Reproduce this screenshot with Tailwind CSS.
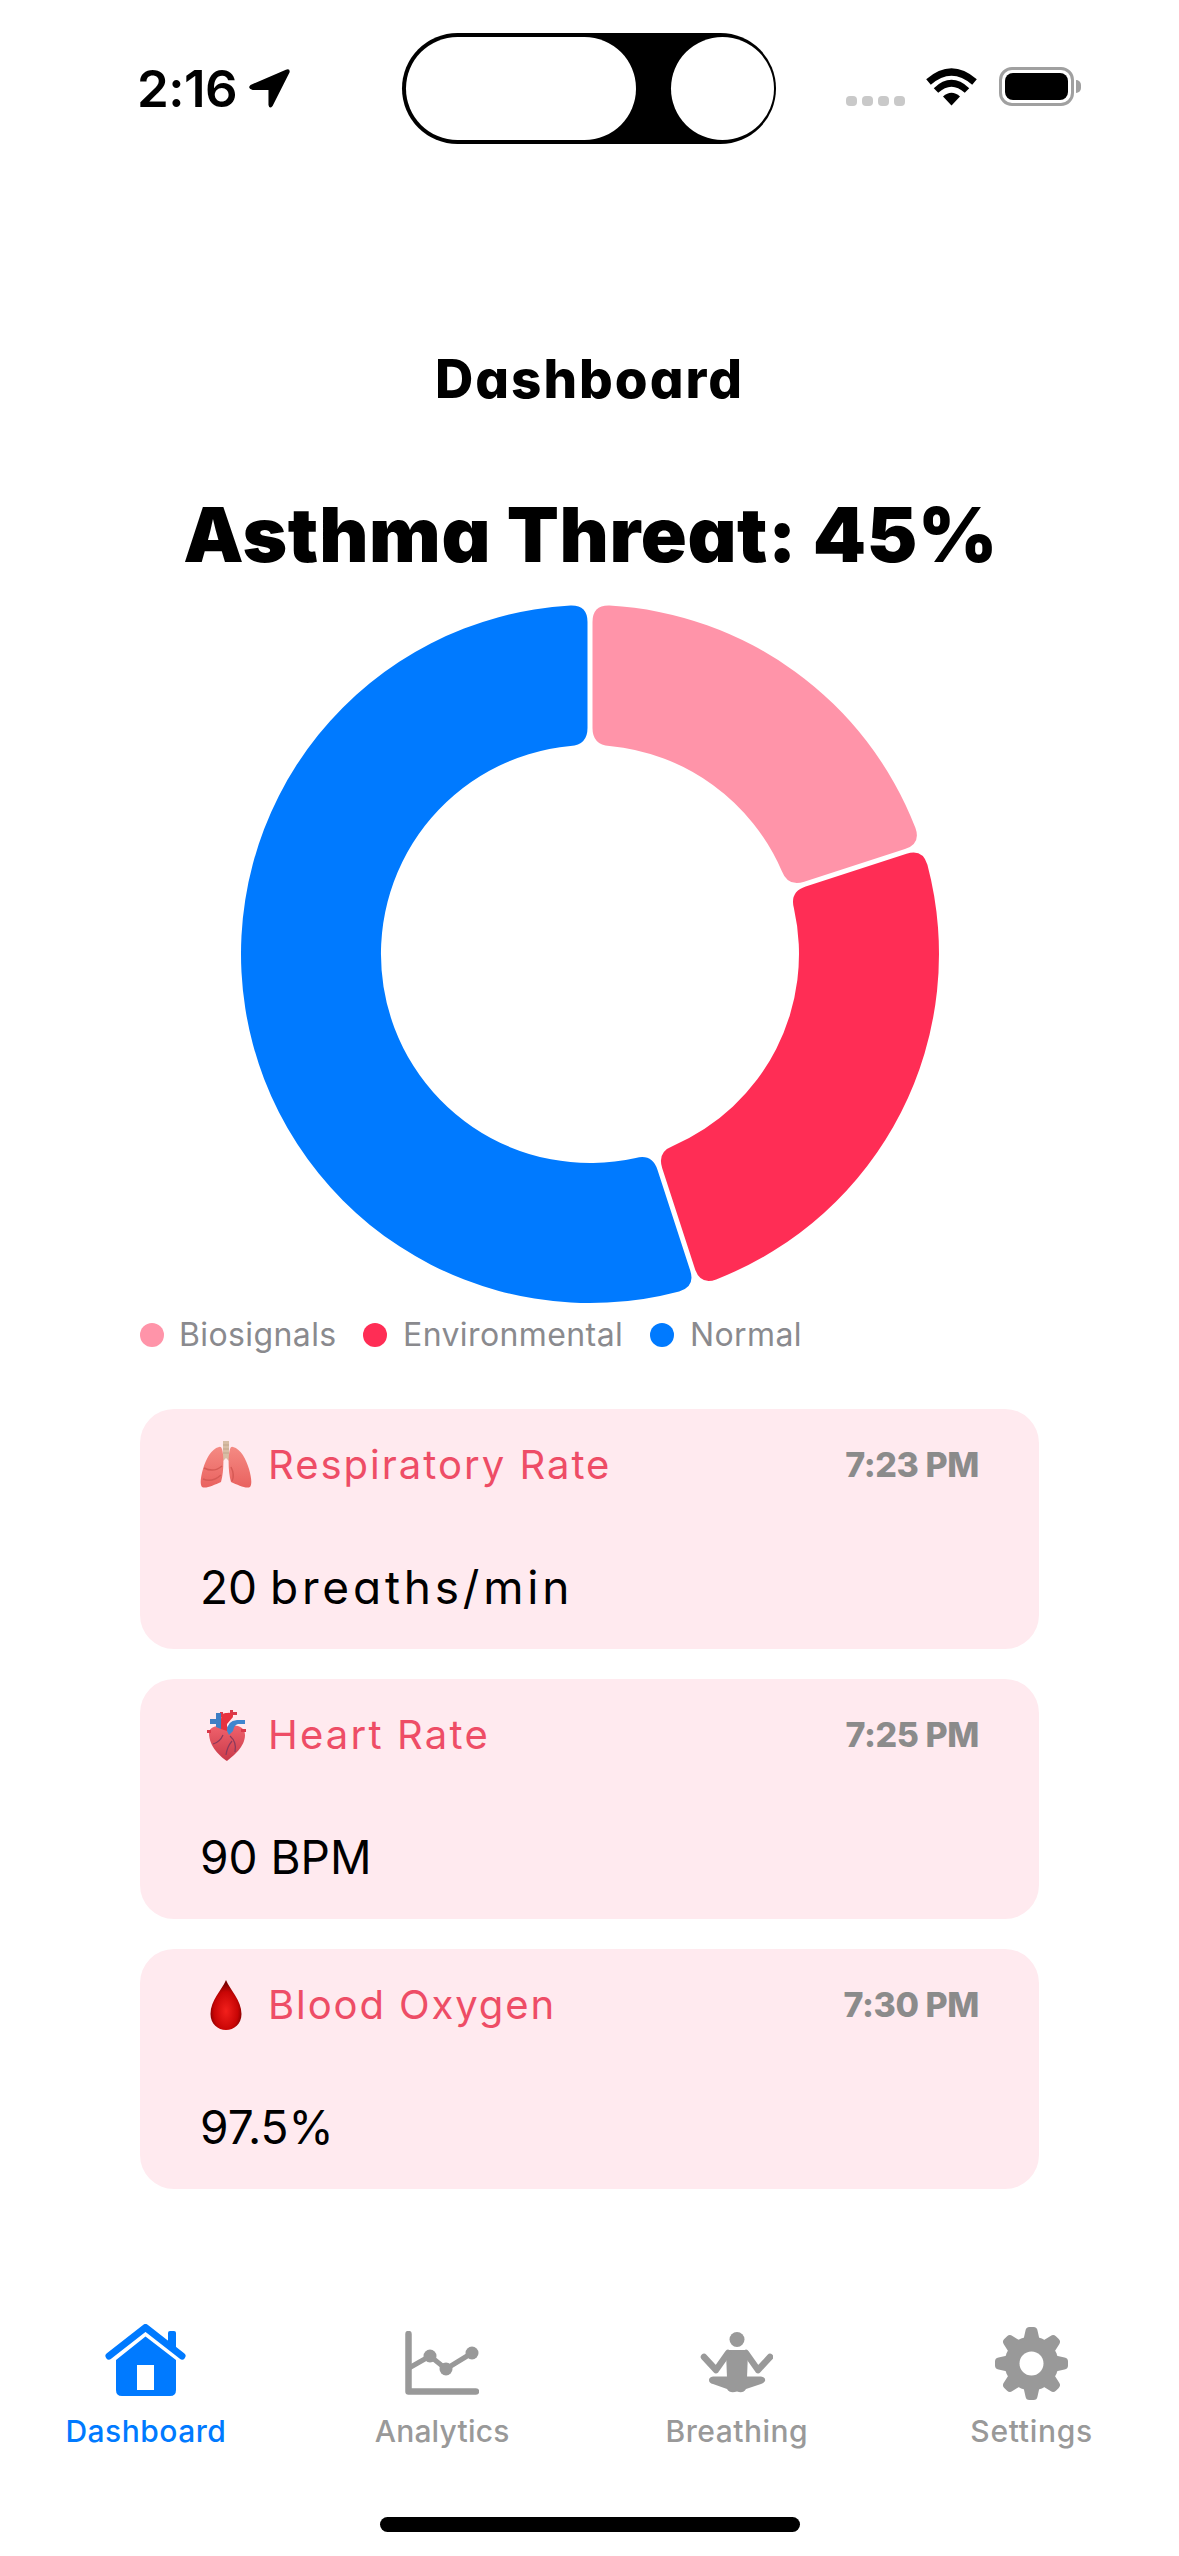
<!DOCTYPE html>
<html lang="en">

<head>
  <meta charset="UTF-8">
  <title>Dashboard</title>
  <script src="https://cdn.jsdelivr.net/npm/@tailwindcss/browser@4"></script>
</head>

<body class="bg-white text-black min-h-screen [font-family:Inter,sans-serif] overflow-hidden">
  <div class="w-[1179px] h-[2556px] bg-white">

    <!-- status bar -->
    <div class="flex h-[144px] pt-[33px] pl-[137px]">
      <div class="flex items-center w-[265px] h-[111px]">
        <span class="text-[51px] leading-[60px] font-semibold tracking-[-0.5px]">2:16</span>
        <svg class="ml-[12px]" width="41" height="39" viewBox="0 0 40 38"><path d="M1.500 15.500 L36 .6 Q40.500 -.8 39.500 3.500 L23 36 Q20 39.500 19 35 V20.500 H3.500 Q-2 18.500 1.500 15.500Z" fill="#000"/></svg>
      </div>
      <div class="flex justify-between items-center w-[374px] h-[111px] bg-black rounded-full pl-[4px] pr-[2px]">
        <div class="w-[230px] h-[103px] bg-white rounded-full"></div>
        <div class="w-[103px] h-[103px] bg-white rounded-full"></div>
      </div>
      <div class="flex items-end h-[38px] mt-[35px] ml-[70px]">
        <div class="flex gap-[5px]">
          <span class="w-[11px] h-[10px] rounded-[4px] bg-[#c9c9c9]"></span>
          <span class="w-[11px] h-[10px] rounded-[4px] bg-[#c9c9c9]"></span>
          <span class="w-[11px] h-[10px] rounded-[4px] bg-[#c9c9c9]"></span>
          <span class="w-[11px] h-[10px] rounded-[4px] bg-[#c9c9c9]"></span>
        </div>
        <svg class="ml-[21px]" width="51" height="38" viewBox="0 0 51 38">
          <path d="M2.500 14 Q25.500 -6 48.500 14" fill="none" stroke="#000" stroke-width="7"/>
          <path d="M10 22.500 Q25.500 8 41 22.500" fill="none" stroke="#000" stroke-width="6.500"/>
          <path d="M25.500 37.500 L17 28.500 Q25.500 21 34 28.500Z" fill="#000"/>
        </svg>
        <div class="relative ml-[22px] w-[75px] h-[39px] border-[3px] border-[#a0a0a0] rounded-[13px] p-[3px]">
          <div class="w-full h-full bg-black rounded-[8px]"></div>
          <span class="absolute -right-[10px] top-[10px] w-[5px] h-[13px] rounded-r-full bg-[#a0a0a0]"></span>
        </div>
      </div>
    </div>

    <h1 class="mt-[205px] text-center text-[53px] leading-[60px] font-extrabold tracking-[2px] [font-feature-settings:'cv11']">Dashboard</h1>
    <h2 class="mt-[83px] pl-[2px] text-center text-[76px] leading-[84px] font-black tracking-[0.6px] [font-feature-settings:'cv11']">Asthma Threat: 45%</h2>

    <!-- donut -->
    <svg id="donut" class="block mx-auto mt-[28px]" width="700" height="700" viewBox="0 0 700 700"></svg>

    <!-- legend -->
    <div class="flex items-center h-[40px] mt-[11px] pl-[140px] text-[32px] leading-[40px] text-[#8a8a8e] tracking-[0.4px]">
      <span class="w-[24px] h-[24px] rounded-full bg-[#ff94a9]"></span>
      <span class="ml-[15px] w-[184px]">Biosignals</span>
      <span class="w-[24px] h-[24px] rounded-full bg-[#ff2d55]"></span>
      <span class="ml-[16px] w-[247px]">Environmental</span>
      <span class="w-[24px] h-[24px] rounded-full bg-[#007aff]"></span>
      <span class="ml-[16px]">Normal</span>
    </div>

    <!-- vitals -->
    <div class="mt-[54px] mx-[140px] w-[899px] flex flex-col gap-[30px]">
      <div class="h-[240px] rounded-[34px] bg-[#ffeaef] px-[60px] pt-[31px]">
        <div class="flex items-center justify-between h-[50px]">
          <div class="flex items-center gap-[16px]">
            <svg class="w-[52px] h-[48px]" viewBox="0 0 52 48">
              <defs>
                <linearGradient id="lung" x1="0" y1="0" x2="0" y2="1"><stop offset="0" stop-color="#f58a83"/><stop offset="1" stop-color="#e9625f"/></linearGradient>
              </defs>
              <path d="M23 0 H29 V15 L34 22 H31 L26 17 L21 22 H18 L23 15Z" fill="#d8bda5"/>
              <path d="M23 4 H29 M23 8 H29 M23 12 H29" stroke="#c2a58c" stroke-width="1"/>
              <path d="M19 6 C11 8 6 18 3 28 C1 35 -.5 43 2 46 C6 48 14 44 21 41 C24 31 24 14 22 8 Q21 5 19 6Z" fill="url(#lung)"/>
              <path d="M33 6 C41 8 46 18 49 28 C51 35 52.500 43 50 46 C46 48 38 44 31 41 C28 31 28 14 30 8 Q31 5 33 6Z" fill="url(#lung)"/>
              <path d="M4 27 Q14 32 22 25 M3 38 Q12 42 21 34 M31 26 Q35 34 32 40" fill="none" stroke="#d65a55" stroke-width="1.500"/>
            </svg>
            <span class="text-[40px] leading-[50px] text-[#ee4d66] tracking-[2px]">Respiratory Rate</span>
          </div>
          <span class="text-[34px] leading-[50px] font-extrabold tracking-[-0.4px] text-[#8b8b8b]">7:23 PM</span>
        </div>
        <p class="mt-[69px] text-[46px] leading-[56px] [font-feature-settings:'cv11']">20 <span class="tracking-[3.8px]">breaths/min</span></p>
      </div>

      <div class="h-[240px] rounded-[34px] bg-[#ffeaef] px-[60px] pt-[31px]">
        <div class="flex items-center justify-between h-[50px]">
          <div class="flex items-center gap-[16px]">
            <svg class="w-[52px] h-[52px]" viewBox="0 0 52 52">
              <defs>
                <linearGradient id="heart" x1="0" y1="0" x2="0" y2="1"><stop offset="0" stop-color="#f0626c"/><stop offset="1" stop-color="#c93a4a"/></linearGradient>
              </defs>
              <path d="M9 24 C9 16 22 16 27 18 C33 15 45 16 45 26 C45 38 33 47 27 52 C21 48 9 38 9 24Z" fill="url(#heart)"/>
              <path d="M7 21 H11 V24 H7Z M41 20 H46 V23 H41Z M20 3 H23 V8 H20Z M30 1 H33 V7 H30Z M33 3 H37 V6 H33Z" fill="#d9394a"/>
              <path d="M21 20 V10 Q21 3 27 4 Q33 3 33 8 L27 15 L27 22Z" fill="#e8323f"/>
              <path d="M10 10 H16 V4 H21 V20 L16 18 V15 H10Z" fill="#3f7fc4"/>
              <path d="M27 22 Q27 12 37 11 H45 V15 H38 Q34 16 33 22 L29 26Z" fill="#3f86cf"/>
              <path d="M30 27 Q37 33 35 43 M23 26 Q20 33 13 35 M32 32 Q27 38 26 46" fill="none" stroke="#8a3a5c" stroke-width="1.200"/>
            </svg>
            <span class="text-[40px] leading-[50px] text-[#ee4d66] tracking-[2.2px]">Heart Rate</span>
          </div>
          <span class="text-[34px] leading-[50px] font-extrabold tracking-[-0.4px] text-[#8b8b8b]">7:25 PM</span>
        </div>
        <p class="mt-[69px] text-[46px] leading-[56px] [font-feature-settings:'cv11']">90 BPM</p>
      </div>

      <div class="h-[240px] rounded-[34px] bg-[#ffeaef] px-[60px] pt-[31px]">
        <div class="flex items-center justify-between h-[50px]">
          <div class="flex items-center gap-[16px]">
            <svg class="w-[52px] h-[50px]" viewBox="0 0 52 50">
              <defs>
                <radialGradient id="drop" cx=".5" cy=".62" r=".55"><stop offset="0" stop-color="#f3201c"/><stop offset=".7" stop-color="#c80505"/><stop offset="1" stop-color="#7a0000"/></radialGradient>
              </defs>
              <path d="M26 0 C30 10 41.500 20 41.500 34 C41.500 44 34 50 26 50 C18 50 10.500 44 10.500 34 C10.500 20 22 10 26 0Z" fill="url(#drop)"/>
            </svg>
            <span class="text-[40px] leading-[50px] text-[#ee4d66] tracking-[1.9px]">Blood Oxygen</span>
          </div>
          <span class="text-[34px] leading-[50px] font-extrabold tracking-[-0.4px] text-[#8b8b8b]">7:30 PM</span>
        </div>
        <p class="mt-[69px] text-[46px] leading-[56px] [font-feature-settings:'cv11']">97.5%</p>
      </div>
    </div>

    <!-- tab bar -->
    <div class="grid grid-cols-4 mt-[134px] text-[30px] leading-[36px] font-medium tracking-[0.5px] text-[#999999] text-center">
      <div class="flex flex-col items-center pr-[3px] text-[#007aff]">
        <div class="flex items-center h-[80px] mb-[10px]">
          <svg class="mb-[6px]" width="81" height="72" viewBox="0 0 81 72" fill="#007aff">
            <path d="M4 32 L40.500 3.500 L77 32" fill="none" stroke="#007aff" stroke-width="7" stroke-linecap="round" stroke-linejoin="round"/>
            <path d="M63 9 Q63 7 65 7 H69 Q71 7 71 9 V27 L63 20Z"/>
            <path fill-rule="evenodd" d="M11 36 L40.500 12.500 L71 36 V66 Q71 72 65 72 H17 Q11 72 11 66Z M32 41 V66 H49 V41Z"/>
          </svg>
        </div>
        <span>Dashboard</span>
      </div>
      <div class="flex flex-col items-center">
        <div class="flex items-center h-[80px] mb-[10px]">
          <svg width="74" height="64" viewBox="0 0 74 64" fill="#999999">
            <path d="M3.500 3 V60.500 H71" fill="none" stroke="#999999" stroke-width="6.500" stroke-linecap="round" stroke-linejoin="round"/>
            <path d="M4 37 L25 25 L41 38 L67 22" fill="none" stroke="#999999" stroke-width="5"/>
            <circle cx="25" cy="25" r="6.500"/>
            <circle cx="41" cy="38" r="6.500"/>
            <circle cx="67" cy="22" r="6.500"/>
          </svg>
        </div>
        <span class="tracking-[0.2px]">Analytics</span>
      </div>
      <div class="flex flex-col items-center">
        <div class="flex items-center h-[80px] mb-[10px]">
          <svg width="73" height="62" viewBox="0 0 73 62" fill="#999999">
            <circle cx="37" cy="7.500" r="7.500"/>
            <path d="M30 18 H44 Q47 18 48 20 L47 46 H27 L26 20 Q27 18 30 18Z"/>
            <path d="M4 25 L16 38 L28 21 M70 25 L58 38 L46 21" fill="none" stroke="#999999" stroke-width="6.500" stroke-linecap="round" stroke-linejoin="round"/>
            <path d="M13 44.500 L61 44.500 Q66 45.500 65 49 Q64 51 61 52 L46 57 Q43 62 37 59.500 Q30 62 27 57 L13 52 Q9 51 9 48 Q9 45 13 44.500Z"/>
          </svg>
        </div>
        <span>Breathing</span>
      </div>
      <div class="flex flex-col items-center">
        <div class="flex items-center h-[80px] mb-[10px]">
          <svg width="73" height="73" viewBox="-36.500 -36.500 73 73" fill="#999999">
            <circle r="27"/>
            <path d="M-8 -24 L-6 -33 Q-5.500 -36.500 -2 -36.500 H2 Q5.500 -36.500 6 -33 L8 -24Z"/>
            <path transform="rotate(45)" d="M-8 -24 L-6 -33 Q-5.500 -36.500 -2 -36.500 H2 Q5.500 -36.500 6 -33 L8 -24Z"/>
            <path transform="rotate(90)" d="M-8 -24 L-6 -33 Q-5.500 -36.500 -2 -36.500 H2 Q5.500 -36.500 6 -33 L8 -24Z"/>
            <path transform="rotate(135)" d="M-8 -24 L-6 -33 Q-5.500 -36.500 -2 -36.500 H2 Q5.500 -36.500 6 -33 L8 -24Z"/>
            <path transform="rotate(180)" d="M-8 -24 L-6 -33 Q-5.500 -36.500 -2 -36.500 H2 Q5.500 -36.500 6 -33 L8 -24Z"/>
            <path transform="rotate(225)" d="M-8 -24 L-6 -33 Q-5.500 -36.500 -2 -36.500 H2 Q5.500 -36.500 6 -33 L8 -24Z"/>
            <path transform="rotate(270)" d="M-8 -24 L-6 -33 Q-5.500 -36.500 -2 -36.500 H2 Q5.500 -36.500 6 -33 L8 -24Z"/>
            <path transform="rotate(315)" d="M-8 -24 L-6 -33 Q-5.500 -36.500 -2 -36.500 H2 Q5.500 -36.500 6 -33 L8 -24Z"/>
            <circle r="12" fill="#fff"/>
          </svg>
        </div>
        <span class="tracking-[0.7px]">Settings</span>
      </div>
    </div>

    <!-- home indicator -->
    <div class="mt-[68px] mx-auto w-[420px] h-[15px] rounded-full bg-black"></div>
  </div>

  <script>
    // 20 / 25 / 55 split, angles clockwise from 12 o'clock
    const segments = [
      { from: 0, to: 72, color: '#ff94a9' },
      { from: 72, to: 162, color: '#ff2d55' },
      { from: 162, to: 360, color: '#007aff' }
    ];
    const C = 350, R = 349, r = 209, GAP = 2.5, CORNER = 17;

    const pt = (rad, a) => [C + rad * Math.sin(a), C - rad * Math.cos(a)];
    const f = p => p[0].toFixed(2) + ' ' + p[1].toFixed(2);

    function sector(from, to) {
      const a0 = from * Math.PI / 180, a1 = to * Math.PI / 180;
      const o0 = a0 + Math.asin(GAP / R), o1 = a1 - Math.asin(GAP / R);
      const i0 = a0 + Math.asin(GAP / r), i1 = a1 - Math.asin(GAP / r);
      const dO = CORNER / R, dI = CORNER / r;
      const large = (to - from) > 180 ? 1 : 0;
      // a point on the straight edge, a bit inward from a corner
      const edge = (a, rad) => {
        const off = a === a0 ? GAP : -GAP;
        return [C + rad * Math.sin(a) + off * Math.cos(a), C - rad * Math.cos(a) + off * Math.sin(a)];
      };
      return [
        'M', f(edge(a0, R - CORNER)),
        'Q', f(pt(R, o0)), f(pt(R, o0 + dO)),
        'A', R, R, 0, large, 1, f(pt(R, o1 - dO)),
        'Q', f(pt(R, o1)), f(edge(a1, R - CORNER)),
        'L', f(edge(a1, r + CORNER)),
        'Q', f(pt(r, i1)), f(pt(r, i1 - dI)),
        'A', r, r, 0, large, 0, f(pt(r, i0 + dI)),
        'Q', f(pt(r, i0)), f(edge(a0, r + CORNER)),
        'Z'
      ].join(' ');
    }

    const svg = document.getElementById('donut');
    svg.innerHTML = segments.map(s => `<path d="${sector(s.from, s.to)}" fill="${s.color}"/>`).join('');
  </script>
</body>

</html>
